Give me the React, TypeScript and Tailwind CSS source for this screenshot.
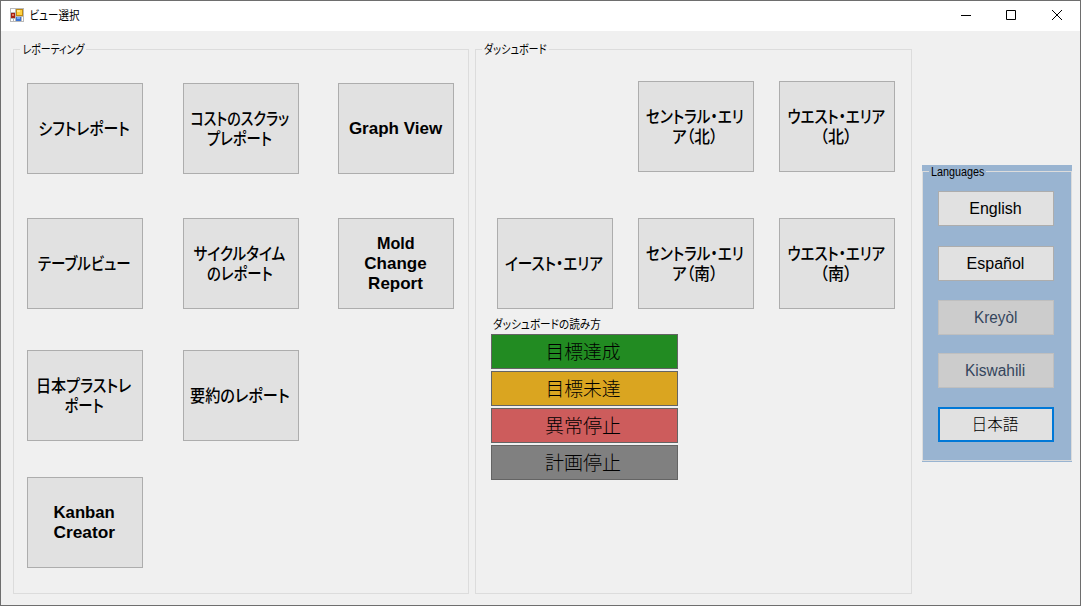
import React from "react";

const jp = "font-['Liberation_Sans','Noto_Sans_CJK_JP',sans-serif]";

type LineProps = { text: string; w: number; size: number; weight?: string };

/* One line of label text, fitted to a fixed advance width. */
function Line({ text, w, size, weight = "font-normal" }: LineProps) {
  const ref = React.useRef<HTMLSpanElement>(null);
  const [scale, setScale] = React.useState(1);
  React.useLayoutEffect(() => {
    if (ref.current) setScale(w / ref.current.offsetWidth);
  }, [w, text]);
  return (
    <span className="flex justify-center" style={{ width: w }}>
      <span
        ref={ref}
        className={`inline-block shrink-0 whitespace-pre [font-feature-settings:'palt'] ${weight}`}
        style={{ fontSize: size, transform: `scaleX(${scale})` }}
      >
        {text}
      </span>
    </span>
  );
}

type Tile = { lines: [string, number][] } | null;

function TileButton({ tile }: { tile: Tile }) {
  if (!tile) return <div className="h-[91px] w-[116px]" />;
  return (
    <button className="flex h-[91px] w-[116px] flex-col items-center justify-center border border-[#adadad] bg-[#e1e1e1] pr-0.5 text-black">
      {tile.lines.map(([text, w]) => {
        const latin = /[A-Za-z]/.test(text);
        return (
          <span key={text} className={`flex h-5 items-center ${latin ? "pl-px" : "pt-px"}`}>
            <Line text={text} w={w} size={17} weight={latin ? "font-bold" : "font-medium"} />
          </span>
        );
      })}
    </button>
  );
}

function TileRow({ tiles, className }: { tiles: Tile[]; className: string }) {
  return (
    <div className={`flex ${className}`}>
      {tiles.map((t, i) => (
        <TileButton key={i} tile={t} />
      ))}
    </div>
  );
}

const reports: Tile[][] = [
  [{ lines: [["シフトレポート", 91]] }, { lines: [["コストのスクラッ", 99], ["プレポート", 65]] }, { lines: [["Graph View", 93]] }],
  [{ lines: [["テーブルビュー", 93]] }, { lines: [["サイクルタイム", 92], ["のレポート", 66]] }, { lines: [["Mold", 38], ["Change", 62], ["Report", 55]] }],
  [{ lines: [["日本プラストレ", 95], ["ポート", 39]] }, { lines: [["要約のレポート", 100]] }],
  [{ lines: [["Kanban", 61], ["Creator", 61]] }],
];

const areas: Tile[][] = [
  [null, { lines: [["セントラル・エリ", 98], ["ア（北）", 46]] }, { lines: [["ウエスト・エリア", 98], ["（北）", 32]] }],
  [{ lines: [["イースト・エリア", 98]] }, { lines: [["セントラル・エリ", 98], ["ア（南）", 46]] }, { lines: [["ウエスト・エリア", 98], ["（南）", 32]] }],
];

const legend = [
  { text: "目標達成", w: 75, color: "bg-[#228b22]" },
  { text: "目標未達", w: 75, color: "bg-[#daa520]" },
  { text: "異常停止", w: 76, color: "bg-[#cd5c5c]" },
  { text: "計画停止", w: 76, color: "bg-[#808080]" },
];

const languages = [
  { text: "English", w: 52, weight: "font-normal", style: "mt-0 border border-[#adadad] bg-[#e1e1e1] text-black" },
  { text: "Español", w: 58, weight: "font-normal", style: "mt-5 border border-[#adadad] bg-[#e1e1e1] text-black" },
  { text: "Kreyòl", w: 43, weight: "font-normal", style: "mt-[19px] border border-[#bfbfbf] bg-[#cccccc] text-[#34455c]" },
  { text: "Kiswahili", w: 60, weight: "font-normal", style: "mt-[18px] border border-[#bfbfbf] bg-[#cccccc] text-[#34455c]" },
  { text: "日本語", w: 47, weight: "font-light", style: "mt-[19px] border-2 border-[#0078d7] bg-[#e1e1e1] pr-0.5 text-black" },
];

function Legend({ text, w, line, bg }: { text: string; w: number; line: string; bg: string }) {
  return (
    <div className="flex h-3 items-center">
      <div className={`h-px w-[7px] ${line}`} />
      <div className={`flex h-3 items-center px-0.5 pt-0.5 ${bg}`}>
        <Line text={text} w={w} size={12} />
      </div>
      <div className={`h-px flex-1 ${line}`} />
    </div>
  );
}

function AppIcon() {
  return (
    <svg width="14" height="14" viewBox="0 0 14 14" shapeRendering="crispEdges">
      <rect width="14" height="14" fill="#b9b9b9" />
      <rect x="1" y="1" width="4" height="3" fill="#fff" />
      <rect x="1" y="11" width="2" height="2" fill="#fff" />
      <rect x="4" y="11" width="1" height="2" fill="#fff" />
      <rect x="12" y="9" width="1" height="4" fill="#fff" />
      <rect x="6" y="1" width="7" height="7" fill="#c08a10" />
      <rect x="7" y="2" width="5" height="5" fill="#ffd140" />
      <rect x="7" y="2" width="3" height="2" fill="#ffe78f" />
      <rect x="1" y="5" width="4" height="5" fill="#a52113" />
      <rect x="2" y="6" width="2" height="2" fill="#e77860" />
      <rect x="6" y="9" width="5" height="4" fill="#3c73d4" />
      <rect x="7" y="9" width="3" height="2" fill="#78aaf4" />
    </svg>
  );
}

export default function App() {
  return (
    <div className={`flex h-[606px] w-[1081px] flex-col overflow-hidden border border-[#6e6e6e] bg-[#f0f0f0] leading-none text-black ${jp}`}>
      <header className="flex h-[30px] shrink-0 items-center bg-white pl-[9px]">
        <div className="-mt-0.5"><AppIcon /></div>
        <div className="ml-[5px] flex-1"><Line text="ビュー選択" w={50} size={12} /></div>
        <svg width="135" height="30" viewBox="0 0 135 30" fill="none" stroke="#000">
          <path d="M16 14.5h10" />
          <path d="M61.5 9.5h9v9h-9z" />
          <path d="M107 9l10 10M117 9l-10 10" />
        </svg>
      </header>
      <main className="flex flex-1 items-start pl-3">
        <section className="mt-3 w-[456px]">
          <Legend text="レポーティング" w={62} line="bg-[#dcdcdc]" bg="bg-[#f0f0f0]" />
          <div className="-mt-1.5 flex h-[545px] flex-col border border-t-0 border-[#dcdcdc] pl-[13px] pt-[34px]">
            <TileRow tiles={reports[0]} className="gap-[39.5px]" />
            <TileRow tiles={reports[1]} className="mt-11 gap-[39.5px]" />
            <TileRow tiles={reports[2]} className="mt-[41px] gap-10" />
            <TileRow tiles={reports[3]} className="mt-9" />
          </div>
        </section>
        <section className="ml-1.5 mt-3 w-[437px]">
          <Legend text="ダッシュボード" w={63} line="bg-[#dcdcdc]" bg="bg-[#f0f0f0]" />
          <div className="-mt-1.5 flex h-[545px] flex-col border border-t-0 border-[#dcdcdc] pt-8">
            <TileRow tiles={areas[0]} className="gap-[25px] pl-[21px]" />
            <TileRow tiles={areas[1]} className="mt-[46px] gap-[25px] pl-[21px]" />
            <div className="ml-[17px] mt-[9px] h-4 self-start pt-px"><Line text="ダッシュボードの読み方" w={108} size={12} /></div>
            <div className="ml-[15px] flex w-[187px] flex-col gap-0.5">
              {legend.map((l) => (
                <div key={l.text} className={`flex h-[35px] items-center justify-center border border-[#646464] pr-[3px] pt-px ${l.color}`}>
                  <Line text={l.text} w={l.w} size={19} weight="font-light" />
                </div>
              ))}
            </div>
          </div>
        </section>
        <aside className="ml-2.5 mt-[134px] h-[297px] w-[150px] bg-[#99b4d1]">
          <Legend text="Languages" w={53} line="bg-[#dcdcdc]" bg="bg-[#99b4d1]" />
          <div className="-mt-1.5 flex h-[290px] flex-col items-center border border-t-0 border-[#dcdcdc] pr-[3px] pt-5">
            {languages.map((l) => (
              <button key={l.text} className={`flex h-[35px] w-[116px] shrink-0 items-center justify-center ${l.style}`}>
                <Line text={l.text} w={l.w} size={16} weight={l.weight} />
              </button>
            ))}
          </div>
        </aside>
      </main>
    </div>
  );
}
